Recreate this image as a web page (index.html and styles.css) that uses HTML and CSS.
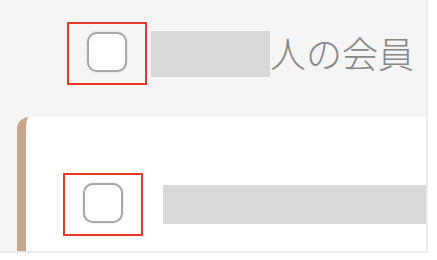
FILE: index.html
```html
<!DOCTYPE html>
<html lang="ja">
<head>
<meta charset="utf-8">
<link rel="stylesheet" href="styles.css">
</head>
<body>
<div class="panel">
  <div class="head-row">
    <div class="mark">
      <span class="check"></span>
    </div>
    <span class="redact redact-name"></span>
    <span class="label">人の会員</span>
  </div>
  <div class="card">
    <div class="card-row">
      <div class="mark">
        <span class="check"></span>
      </div>
      <span class="redact redact-line"></span>
    </div>
  </div>
</div>
</body>
</html>
```

FILE: styles.css
```css
html, body {
  margin: 0;
  padding: 0;
  background: #ffffff;
}

body {
  font-family: "Noto Sans CJK JP", "Noto Sans", sans-serif;
}

.panel {
  width: 426px;
  height: 251px;
  background: #f5f5f5;
  border-right: 2px solid #ececec;
  border-bottom: 2px solid #ececec;
  overflow: hidden;
  display: flex;
  flex-direction: column;
}

.head-row {
  display: flex;
  align-items: flex-start;
  padding: 22px 0 0 67px;
  height: 95px;
  box-sizing: border-box;
}

.mark {
  width: 80px;
  height: 63px;
  box-sizing: border-box;
  border: 2px solid #e5392d;
  display: flex;
  justify-content: center;
  padding-top: 8px;
  flex-shrink: 0;
}

.check {
  width: 40px;
  height: 40px;
  box-sizing: border-box;
  border: 2.5px solid #a8a8a8;
  border-radius: 10px;
  background: #ffffff;
  box-shadow: 0 0 1.5px rgba(0, 0, 0, 0.25);
}

.redact {
  display: block;
  background: #d9d9d9;
  flex-shrink: 0;
}

.redact-name {
  width: 119px;
  height: 46px;
  margin: 9px 0 0 4px;
}

.label {
  font-size: 36px;
  font-weight: 300;
  line-height: 46px;
  margin-top: 7px;
  color: #888888;
  white-space: nowrap;
}

.card {
  margin: 22px 0 0 17px;
  flex: 1;
  background: #ffffff;
  border-left: 9px solid #c8a68c;
  border-top-left-radius: 12px;
  padding: 56px 0 0 37px;
}

.card-row {
  display: flex;
  align-items: flex-start;
}

.card-row .mark {
  padding-top: 8px;
}

.redact-line {
  flex: 1;
  height: 39px;
  margin: 12px 0 0 20px;
}
```
